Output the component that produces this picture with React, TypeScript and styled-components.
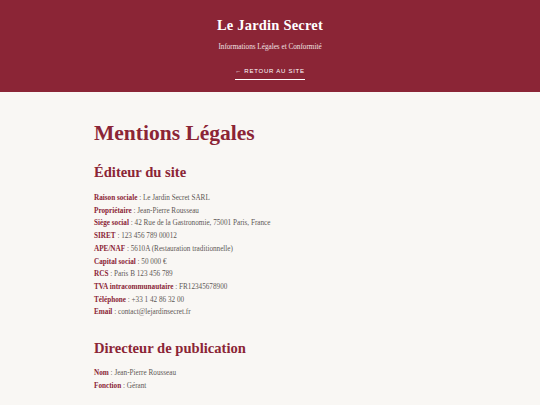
import styled, { createGlobalStyle } from "styled-components";

const GlobalStyle = createGlobalStyle`
  html, body {
    margin: 0;
    padding: 0;
    background: #f9f7f4;
  }
  body {
    font-family: "Liberation Serif", "DejaVu Serif", serif;
  }
`;

const Header = styled.header`
  background: #8b2536;
  height: 92px;
  display: flex;
  flex-direction: column;
  align-items: center;
  box-sizing: border-box;
  padding-top: 16px;
  color: #fff;
`;

const SiteTitle = styled.h1`
  margin: 0;
  font-family: "Liberation Serif", serif;
  font-weight: 700;
  font-size: 14.5px;
  line-height: 19px;
  letter-spacing: 0.2px;
`;

const SiteSubtitle = styled.p`
  margin: 7px 0 0;
  font-family: "Liberation Serif", serif;
  font-size: 7.2px;
  line-height: 10px;
  color: #f1e2e4;
`;

const BackLink = styled.a`
  margin-top: 15px;
  font-family: "Liberation Sans", Arial, sans-serif;
  font-size: 6px;
  letter-spacing: 0.75px;
  line-height: 9px;
  color: #fff;
  text-decoration: none;
  padding-bottom: 3px;
  border-bottom: 1.5px solid #fff;
`;

const Main = styled.main`
  padding: 27px 0 0 94px;
`;

const PageTitle = styled.h2`
  margin: 0;
  font-size: 21.5px;
  line-height: 28px;
  font-weight: 700;
  color: #8b2536;
`;

const SectionTitle = styled.h3<{ $first?: boolean }>`
  margin: ${(p) => (p.$first ? "15px" : "19px")} 0 ${(p) => (p.$first ? "10px" : "9px")};
  font-size: 14.6px;
  line-height: 20px;
  font-weight: 700;
  color: #8b2536;
`;

const InfoList = styled.div`
  display: flex;
  flex-direction: column;
`;

const InfoRow = styled.p`
  margin: 0;
  font-family: "Liberation Serif", serif;
  font-size: 7.2px;
  line-height: 12.7px;
  color: #5e5756;
`;

const Label = styled.strong`
  font-weight: 700;
  color: #8b2536;
`;

const editeur: [string, string][] = [
  ["Raison sociale", "Le Jardin Secret SARL"],
  ["Propriétaire", "Jean-Pierre Rousseau"],
  ["Siège social", "42 Rue de la Gastronomie, 75001 Paris, France"],
  ["SIRET", "123 456 789 00012"],
  ["APE/NAF", "5610A (Restauration traditionnelle)"],
  ["Capital social", "50 000 €"],
  ["RCS", "Paris B 123 456 789"],
  ["TVA intracommunautaire", "FR12345678900"],
  ["Téléphone", "+33 1 42 86 32 00"],
  ["Email", "contact@lejardinsecret.fr"],
];

const directeur: [string, string][] = [
  ["Nom", "Jean-Pierre Rousseau"],
  ["Fonction", "Gérant"],
];

function Rows({ items }: { items: [string, string][] }) {
  return (
    <InfoList>
      {items.map(([label, value]) => (
        <InfoRow key={label}>
          <Label>{label}</Label> : {value}
        </InfoRow>
      ))}
    </InfoList>
  );
}

export default function App() {
  return (
    <>
      <GlobalStyle />
      <Header>
        <SiteTitle>Le Jardin Secret</SiteTitle>
        <SiteSubtitle>Informations Légales et Conformité</SiteSubtitle>
        <BackLink href="#">← RETOUR AU SITE</BackLink>
      </Header>
      <Main>
        <PageTitle>Mentions Légales</PageTitle>
        <SectionTitle $first>Éditeur du site</SectionTitle>
        <Rows items={editeur} />
        <SectionTitle>Directeur de publication</SectionTitle>
        <Rows items={directeur} />
      </Main>
    </>
  );
}
